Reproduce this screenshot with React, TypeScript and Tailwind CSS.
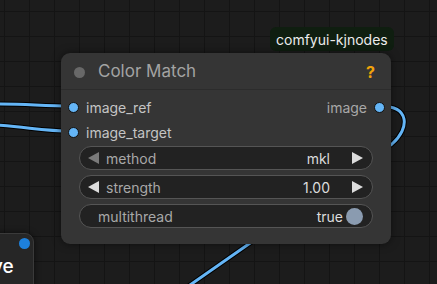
const font = { fontFamily: 'Inter, "Liberation Sans", sans-serif' };

function Slot() {
    return <span className="block w-[11px] h-[11px] rounded-full bg-[#64b5f6] border border-[#111]" />;
}

function Arrow({ dir, dim }: { dir: 'left' | 'right'; dim?: boolean }) {
    return (
        <svg width="11" height="12" viewBox="0 0 11 12" className="shrink-0">
            {dir === 'left' ? (
                <polygon points="11,0 11,12 0,6" fill={dim ? '#7a7a7a' : '#dcdcdc'} />
            ) : (
                <polygon points="0,0 0,12 11,6" fill="#dcdcdc" />
            )}
        </svg>
    );
}

function ComboWidget({ label, value, dimLeft }: { label: string; value: string; dimLeft?: boolean }) {
    return (
        <div className="h-[24px] rounded-full border border-[#555] bg-[#222] flex items-center pl-[8px] pr-[9px] text-[14px]">
            <Arrow dir="left" dim={dimLeft} />
            <span className="ml-[7px] text-[#a8a8a8]">{label}</span>
            <span className="ml-auto text-[#dcdcdc]">{value}</span>
            <span className="ml-[22px]">
                <Arrow dir="right" />
            </span>
        </div>
    );
}

function ToggleWidget({ label, value }: { label: string; value: string }) {
    return (
        <div className="h-[24px] rounded-full border border-[#555] bg-[#222] flex items-center pl-[18px] pr-[9px] text-[14px]">
            <span className="text-[#a8a8a8]">{label}</span>
            <span className="ml-auto text-[#dcdcdc]">{value}</span>
            <span className="ml-[3px] w-[17px] h-[17px] rounded-full bg-[#8a9bb0]" />
        </div>
    );
}

export default function App() {
    return (
        <div
            className="relative w-[437px] h-[284px] overflow-hidden bg-[#1c1c1c]"
            style={{
                ...font,
                backgroundImage:
                    'linear-gradient(#141414 1px, transparent 1px), linear-gradient(90deg, #141414 1px, transparent 1px)',
                backgroundSize: '25px 25px',
                backgroundPosition: '4px 11px',
            }}
        >
            {/* links */}
            <svg className="absolute inset-0" width="437" height="284">
                <g fill="none" strokeLinecap="round">
                    <path d="M -5 104 C 30 104, 40 106, 73 106" stroke="#000" strokeWidth="5" />
                    <path d="M -5 125 C 30 127, 40 131, 73 131" stroke="#000" strokeWidth="5" />
                    <path d="M 380 106 C 410 106, 410 128, 392 144 L 180 292" stroke="#000" strokeWidth="5" />
                    <path d="M -5 104 C 30 104, 40 106, 73 106" stroke="#64b5f6" strokeWidth="3" />
                    <path d="M -5 125 C 30 127, 40 131, 73 131" stroke="#64b5f6" strokeWidth="3" />
                    <path d="M 380 106 C 410 106, 410 128, 392 144 L 180 292" stroke="#64b5f6" strokeWidth="3" />
                </g>
            </svg>

            {/* partial node bottom-left */}
            <div className="absolute left-[-60px] top-[233px] w-[94px] h-[70px] rounded-[9px] border border-[#3a3a3a] bg-[#262626] shadow-[0_0_6px_rgba(0,0,0,0.6)]">
                <div className="absolute right-[3px] top-[4px] w-[11px] h-[11px] rounded-full bg-[#1d80db]" />
                <div className="absolute left-[51px] top-[19px] text-[19px] font-medium text-white">ve</div>
            </div>

            {/* badge */}
            <div className="absolute left-[270px] top-[27px] h-[24px] px-[6px] rounded-[6px] bg-[#0f1e10] flex items-center text-[14px] text-[#ececec]">
                comfyui-kjnodes
            </div>

            {/* node */}
            <div className="absolute left-[61px] top-[53px] w-[330px] h-[191px] rounded-[9px] bg-[#353535] shadow-[0_0_8px_rgba(0,0,0,0.5)] flex flex-col">
                <div className="h-[37px] pt-[2px] flex items-center pl-[13px] pr-[16px] border-b border-[#2c2c2c]">
                    <span className="w-[11px] h-[11px] rounded-full bg-[#686868]" />
                    <span className="ml-[13px] text-[17px] text-[#a3a3a3]">Color Match</span>
                    <span className="ml-auto text-[16px] font-bold text-[#f0a30a]">?</span>
                </div>
                <div className="pt-[5px] flex flex-col">
                    <div className="h-[25px] flex items-center pl-[7px] pr-[6px] text-[14px]">
                        <Slot />
                        <span className="ml-[7px] text-[#c4c4c4]">image_ref</span>
                        <span className="ml-auto text-[#a8a8a8]">image</span>
                        <span className="ml-[7px]">
                            <Slot />
                        </span>
                    </div>
                    <div className="h-[25px] flex items-center pl-[7px] text-[14px]">
                        <Slot />
                        <span className="ml-[7px] text-[#c4c4c4]">image_target</span>
                    </div>
                </div>
                <div className="mt-[1px] px-[18px] flex flex-col gap-[5px]">
                    <ComboWidget label="method" value="mkl" dimLeft />
                    <ComboWidget label="strength" value="1.00" />
                    <ToggleWidget label="multithread" value="true" />
                </div>
            </div>
        </div>
    );
}
